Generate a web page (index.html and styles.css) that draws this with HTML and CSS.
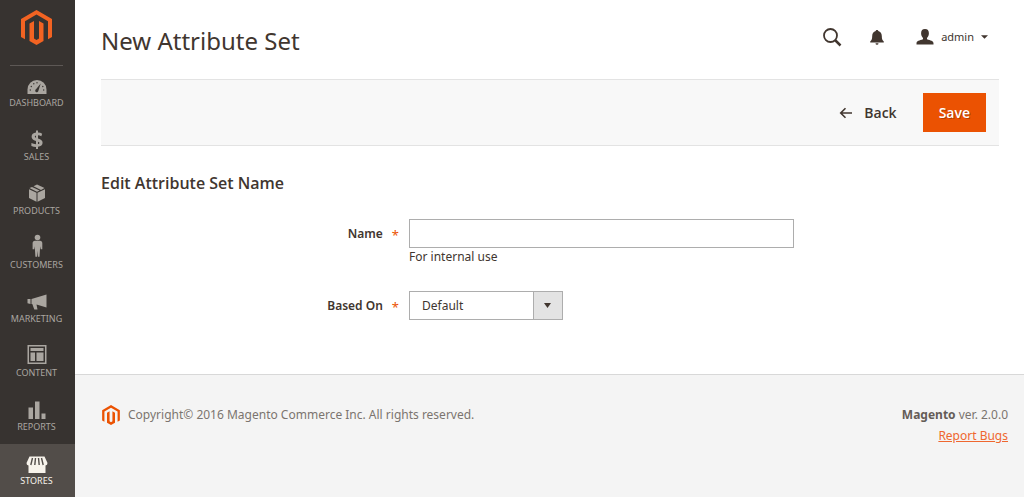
FILE: index.html
```html
<!DOCTYPE html>
<html lang="en">
<head>
<meta charset="utf-8">
<meta name="viewport" content="width=device-width, initial-scale=1">
<title>New Attribute Set</title>
<link rel="stylesheet" href="styles.css">
</head>
<body>
<div class="app">
  <aside class="sidebar">
    <a class="brand" href="#" aria-label="Magento Admin">
      <svg class="brand-logo" viewBox="0 0 31 35"><path d="M15.500 0 31 9v18l-4 2.300V11.300L15.500 4.600 4 11.300v18L0 27V9z"/><path d="M8.500 13.500 13 11v17.500l2.500 1.500 2.500-1.500V11l4.500 2.500v17.500L15.500 35l-7-4z"/></svg>
    </a>
    <nav class="menu-wrap" aria-label="Main">
      <ul class="menu">
        <li class="menu-item"><a href="#"><svg viewBox="0 0 20 20"><path d="M.5 17v-4.500a9.500 9.500 0 0 1 19 0V17z"/><g fill="#373330"><circle cx="3.300" cy="13" r=".7"/><circle cx="4.300" cy="9.500" r=".7"/><circle cx="6.800" cy="6.800" r=".7"/><circle cx="10" cy="5.800" r=".7"/><circle cx="15.800" cy="9.500" r=".7"/><circle cx="16.700" cy="13" r=".7"/><path d="m13.700 6.400-2.300 7.400a1.600 1.600 0 1 1-2.400-1.500z"/></g></svg><span>DASHBOARD</span></a></li>
        <li class="menu-item"><a href="#"><svg viewBox="0 0 20 20"><path d="M9-.5h2v2.100c1.600.1 3 .5 4.200 1.100l-.9 2.600A9 9 0 0 0 11 4.300v3.200c3.100 1 4.600 2.100 4.600 4.300 0 2.100-1.700 3.600-4.600 4V18H9V15.900a11 11 0 0 1-4.600-1v-2.800c1.400.6 3 1 4.600 1.100V9.900c-3.100-1-4.400-2.200-4.400-4.200C4.600 3.300 6.400 1.900 9 1.600zM9 4.400c-.8.200-1.200.6-1.200 1.100S8.200 6.400 9 6.700zm2 8.700c.9-.2 1.400-.6 1.400-1.200 0-.5-.4-.9-1.400-1.200z"/></svg><span>SALES</span></a></li>
        <li class="menu-item"><a href="#"><svg viewBox="0 0 20 20"><path d="m2 4.200 7.500 3.500v9L2 13zM18 4.200V13l-7.500 3.700v-9zM2.500 3 5 1.900l7.600 3.700L10 6.800zM6.500 1.200 10-.5 17.500 3 14 4.900z"/></svg><span>PRODUCTS</span></a></li>
        <li class="menu-item"><a href="#"><svg viewBox="0 0 20 20"><circle cx="10.500" cy="-1.500" r="2.800"/><path d="M8 1.800h5c1.500 0 2.300 1 2.300 2.500v6h-1.600l-.5-3-.7 10.500h-1.600l-.4-6-.5 6H8.400L7.700 7.300l-.5 3H5.600v-6c0-1.500.9-2.500 2.400-2.500z"/></svg><span>CUSTOMERS</span></a></li>
        <li class="menu-item"><a href="#"><svg viewBox="0 0 20 20"><path d="M19.500 1.500v13L9.500 11.500l1 5H7.300l-2-5.500H4.500V6zM.5 6h3v5l-3-.8z"/></svg><span>MARKETING</span></a></li>
        <li class="menu-item"><a href="#"><svg viewBox="0 0 20 20"><path fill-rule="evenodd" d="M.5-2h19v19H.5zM2-.5v16h16V-.5z"/><path d="M3.500 1h13v3h-13zM3.500 5.500H8V14H3.500zM9.500 5.500h7V14h-7z"/></svg><span>CONTENT</span></a></li>
        <li class="menu-item"><a href="#"><svg viewBox="0 0 20 20"><path d="M1.500 6.500H6V18H1.500zM8 .5h4.500V18H8zM14.500 12.500h4V18h-4z"/></svg><span>REPORTS</span></a></li>
        <li class="menu-item active"><a href="#" aria-current="page"><svg viewBox="0 0 20 20"><path d="M2.500 1.500h15l3 6.500a2.500 2.500 0 0 1-2 2.500V18h-17V10.500a2.500 2.500 0 0 1-2-2.500z"/><path fill="none" stroke="#524d49" stroke-width="1.400" d="M5.500 3 3.800 10M8.500 3l-.7 7M11.500 3l.7 7M14.500 3l1.700 7"/></svg><span>STORES</span></a></li>
      </ul>
    </nav>
  </aside>

  <div class="page">
    <header class="page-header">
      <h1 class="page-title">New Attribute Set</h1>
      <div class="header-tools">
        <button class="icon-button" type="button" aria-label="Search"><svg width="20" height="20" viewBox="0 0 20 20"><circle cx="8.500" cy="8.500" r="6.500" fill="none" stroke="currentColor" stroke-width="1.800"/><path d="m13 13 5.500 5.500" stroke="currentColor" stroke-width="2.500"/></svg></button>
        <button class="icon-button" type="button" aria-label="Notifications"><svg width="14" height="16" viewBox="0 0 14 16"><path fill="currentColor" d="M7 1c.8 0 1.300.5 1.300 1.100C10.500 2.800 11.800 4.500 11.800 7c0 3 .6 4.300 2 5.500v1H.2v-1c1.400-1.200 2-2.500 2-5.500 0-2.500 1.300-4.200 3.500-4.900C5.700 1.500 6.200 1 7 1zM5.500 14.300h3a1.500 1.500 0 0 1-3 0z"/></svg></button>
        <button class="account" type="button"><svg width="18" height="16" viewBox="0 0 18 16"><path fill="currentColor" d="M9 0c2.700 0 3.900 1.600 3.900 4.200 0 2.300-.8 3.600-1.900 4.800v1.300c3.500 1.200 6.500 1.500 6.500 4.200V15.500H.5v-1c0-2.700 3-3 6.500-4.200V9C5.900 7.800 5.100 6.500 5.100 4.200 5.100 1.600 6.300 0 9 0z"/></svg><span>admin</span><svg class="caret" width="7" height="4" viewBox="0 0 8 4"><path fill="currentColor" d="M0 0h8L4 4z"/></svg></button>
      </div>
    </header>

    <main class="content">
      <div class="actions">
        <button class="button-back" type="button"><svg width="14" height="12" viewBox="0 0 14 12"><path fill="none" stroke="currentColor" stroke-width="1.600" d="M13 6H1.800M6.500 1.200 1.700 6l4.800 4.800"/></svg>Back</button>
        <button class="button-save" type="submit" form="set-form">Save</button>
      </div>
      <form class="set-form" id="set-form">
        <h2 class="form-title">Edit Attribute Set Name</h2>
        <div class="field">
          <label class="label" for="set-name">Name<span class="required" aria-hidden="true">*</span></label>
          <div class="control">
            <input class="text-input" id="set-name" type="text" required aria-describedby="name-note">
            <div class="note" id="name-note">For internal use</div>
          </div>
        </div>
        <div class="field">
          <label class="label" for="based-on">Based On<span class="required" aria-hidden="true">*</span></label>
          <div class="control">
            <select class="select" id="based-on"><option>Default</option></select>
          </div>
        </div>
      </form>
    </main>

    <footer class="footer">
      <div class="copyright"><svg width="18" height="20" viewBox="0 0 31 35"><path d="M15.500 0 31 9v18l-4 2.300V11.300L15.500 4.600 4 11.300v18L0 27V9z"/><path d="M8.500 13.500 13 11v17.500l2.500 1.500 2.500-1.500V11l4.500 2.500v17.500L15.500 35l-7-4z"/></svg><span>Copyright© 2016 Magento Commerce Inc. All rights reserved.</span></div>
      <div class="version"><div><strong>Magento</strong> ver. 2.0.0</div><a href="#">Report Bugs</a></div>
    </footer>
  </div>
</div>
</body>
</html>
```
FILE: styles.css
```css
* { box-sizing: border-box; }

body {
  margin: 0;
  font: 400 12px/20px "Noto Sans", "Open Sans", sans-serif;
  color: #41362f;
  background: #fff;
}

button, input, select { font: inherit; color: inherit; }
button { padding: 0; border: 0; background: none; cursor: pointer; }
svg { display: block; flex: none; }

.app { display: flex; min-height: 100vh; }

.sidebar {
  display: flex;
  flex: none;
  flex-direction: column;
  width: 75px;
  background: #373330;
}

.brand {
  display: flex;
  justify-content: center;
  height: 66px;
  margin: 0 12px 0 10px;
  padding-top: 10px;
  border-bottom: 1px solid #5d5855;
}

.brand-logo { width: 31px; height: 35px; fill: #f26322; }

.menu-wrap { display: flex; flex: 1; }

.menu {
  display: flex;
  flex: 1;
  flex-direction: column;
  gap: 11px;
  margin: 0;
  padding: 0;
  list-style: none;
}

.menu-item a {
  display: flex;
  flex-direction: column;
  align-items: center;
  padding: 11px 2px 0 0;
  font-size: 9px;
  line-height: 12px;
  color: #aaa6a0;
  text-decoration: none;
}

.menu-item svg { width: 20px; height: 20px; fill: currentColor; overflow: visible; }
.menu-item.active { flex: 1; background: #524d49; }
.menu-item.active a { color: #f7f3eb; }

.page { display: flex; flex: 1; flex-direction: column; min-width: 0; }

.page-header {
  display: flex;
  justify-content: space-between;
  padding: 20px 36px 17px 26px;
}

.page-title { margin: 0; font-size: 24px; font-weight: 400; line-height: 42px; }
.header-tools { display: flex; align-items: center; height: 34px; }
.icon-button { display: grid; place-items: center; margin-right: 28px; }
.account { display: flex; align-items: center; gap: 7px; margin-left: 4px; font-size: 11px; }

.content { padding: 0 25px 52px 26px; }

.actions {
  display: flex;
  align-items: center;
  justify-content: flex-end;
  gap: 26px;
  padding: 13px;
  background: #f8f8f8;
  border-top: 1px solid #e3e3e3;
  border-bottom: 1px solid #e3e3e3;
}

.button-back, .button-save { font-family: "Open Sans", sans-serif; font-size: 14px; font-weight: 600; line-height: 39px; }
.button-back { display: flex; align-items: center; gap: 11px; }

.button-save {
  padding: 0 16px;
  background: #eb5202;
  color: #fff;
  text-shadow: 1px 1px 0 rgba(0, 0, 0, .25);
}

.form-title { margin: 26px 0 25px; font-family: "Open Sans", sans-serif; font-size: 16px; font-weight: 600; line-height: 22px; }

.field { display: flex; align-items: flex-start; }
.field + .field { margin-top: 25px; }

.label {
  display: flex;
  justify-content: flex-end;
  gap: 9px;
  width: 34.3%;
  padding-right: 10px;
  font-weight: 600;
  line-height: 29px;
}

.required { padding-top: 2px; font-size: 13px; font-weight: 400; color: #eb5202; }
.control { width: 42.9%; }

.text-input {
  display: block;
  width: 100%;
  height: 29px;
  padding: 0 10px;
  border: 1px solid #adadad;
  background: #fff;
}

.note { line-height: 18px; }

.select {
  appearance: none;
  display: block;
  width: 40%;
  height: 29px;
  padding: 0 30px 0 12px;
  border: 1px solid #adadad;
  border-radius: 0;
  background:
    url("data:image/svg+xml,%3Csvg xmlns='http://www.w3.org/2000/svg' width='7' height='5'%3E%3Cpath d='M0 0h7L3.500 5z' fill='%2341362f'/%3E%3C/svg%3E") right 11px center no-repeat,
    linear-gradient(90deg, #adadad 1px, #e3e3e3 1px) right / 29px 100% no-repeat,
    #fff;
}

.footer {
  display: flex;
  flex: 1;
  align-items: flex-start;
  justify-content: space-between;
  padding: 29px 16px 29px 27px;
  background: #f4f4f4;
  border-top: 1px solid #d8d8d8;
  color: #7b746f;
  line-height: 21px;
}

.set-form { display: flow-root; }
.copyright { display: flex; align-items: center; gap: 8px; }
.copyright svg { fill: #eb5202; }
.version { text-align: right; }
.version strong { font-weight: 700; color: #645c57; }
.version a { color: #ef672f; }
```
